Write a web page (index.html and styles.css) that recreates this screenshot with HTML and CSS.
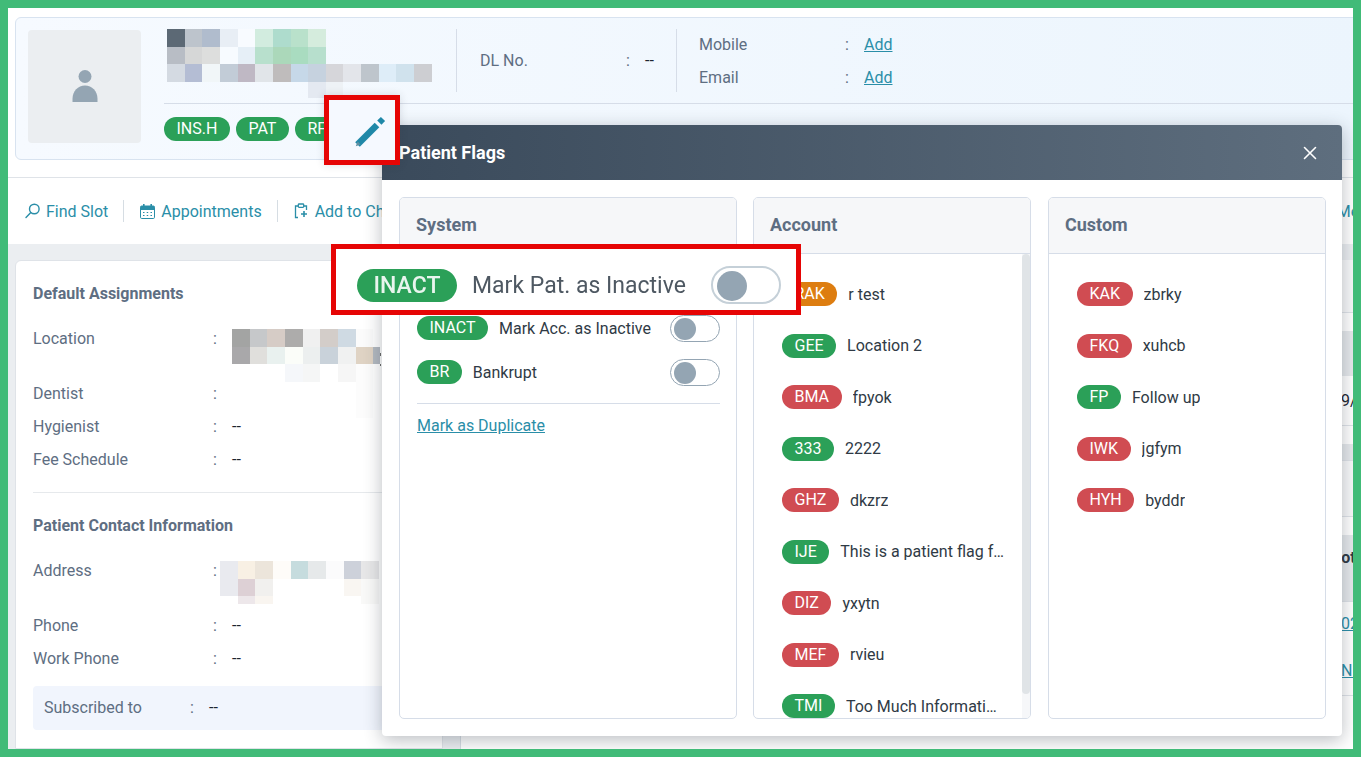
FILE: index.html
```html
<!DOCTYPE html>
<html lang="en">
<head>
<meta charset="utf-8">
<title>Patient Flags</title>
<link rel="stylesheet" href="styles.css">
</head>
<body>
<div class="frame">
  <div class="page">
    <section class="id-card">
      <div class="avatar">
        <svg width="26" height="32" viewBox="0 0 26 32"><circle cx="13" cy="6.5" r="6.5" fill="#94a5b3"/><path d="M0.5 32v-3C0.5 21 6 15.500 13 15.500S25.500 21 25.500 29v3z" fill="#94a5b3"/></svg>
      </div>
      <div class="id-main">
        <div class="id-top">
          <div class="name-block">
            <svg class="mosaic" width="265" height="69" viewBox="167 29 265 69" shape-rendering="crispEdges">
              <rect x="167" y="29" width="18" height="18" fill="#5c6975"/><rect x="185" y="29" width="17" height="18" fill="#bdc4cc"/><rect x="202" y="29" width="18" height="18" fill="#b0bccd"/><rect x="220" y="29" width="18" height="18" fill="#e8eef5"/><rect x="238" y="29" width="17" height="18" fill="#f8fbff"/><rect x="255" y="29" width="18" height="18" fill="#d2ecdf"/><rect x="273" y="29" width="18" height="18" fill="#aedccd"/><rect x="291" y="29" width="17" height="18" fill="#b9e1cb"/><rect x="308" y="29" width="18" height="18" fill="#d5ecdd"/>
              <rect x="167" y="47" width="18" height="17" fill="#b8bdc5"/><rect x="185" y="47" width="17" height="17" fill="#d6d7d7"/><rect x="202" y="47" width="18" height="17" fill="#dddedd"/><rect x="220" y="47" width="18" height="17" fill="#f7fbff"/><rect x="238" y="47" width="17" height="17" fill="#e6eff7"/><rect x="255" y="47" width="18" height="17" fill="#b8e0cd"/><rect x="273" y="47" width="18" height="17" fill="#abd8ba"/><rect x="291" y="47" width="17" height="17" fill="#a9dcc0"/><rect x="308" y="47" width="18" height="17" fill="#b7dfcd"/>
              <rect x="167" y="64" width="18" height="18" fill="#d4dae2"/><rect x="185" y="64" width="17" height="18" fill="#b4bdd4"/><rect x="202" y="64" width="18" height="18" fill="#f1f6f8"/><rect x="220" y="64" width="18" height="18" fill="#c2ccd7"/><rect x="238" y="64" width="17" height="18" fill="#bfb8c4"/><rect x="255" y="64" width="18" height="18" fill="#e1e5e9"/><rect x="273" y="64" width="18" height="18" fill="#bfbcbc"/><rect x="291" y="64" width="17" height="18" fill="#c6d8e8"/><rect x="308" y="64" width="18" height="18" fill="#c6d2df"/><rect x="326" y="64" width="17" height="18" fill="#d6d6da"/><rect x="343" y="64" width="18" height="18" fill="#e3e5ea"/><rect x="361" y="64" width="18" height="18" fill="#bec5cc"/><rect x="379" y="64" width="17" height="18" fill="#deedf8"/><rect x="396" y="64" width="18" height="18" fill="#d0e2ed"/><rect x="414" y="64" width="18" height="18" fill="#cdced2"/>
              <rect x="308" y="82" width="18" height="16" fill="#e4e9f1"/><rect x="326" y="82" width="17" height="16" fill="#eef2f6"/>
            </svg>
          </div>
          <div class="dl-block">
            <span class="dl-label">DL No.</span><span class="colon">:</span><span class="dash">--</span>
          </div>
          <div class="contact-block">
            <div class="contact-row"><span class="contact-label">Mobile</span><span class="colon">:</span><a class="link" href="#">Add</a></div>
            <div class="contact-row"><span class="contact-label">Email</span><span class="colon">:</span><a class="link" href="#">Add</a></div>
          </div>
        </div>
        <div class="id-pills">
          <span class="pill green">INS.H</span>
          <span class="pill green">PAT</span>
          <span class="pill green">RF</span>
        </div>
      </div>
    </section>

    <nav class="toolbar">
      <a class="tool" href="#">
        <svg width="15" height="16" viewBox="0 0 15 16" fill="none" stroke="#2a8ea8" stroke-width="1.400"><circle cx="9.300" cy="6" r="4.800"/><path d="M5.800 9.500 1 14.500" stroke-linecap="round"/></svg>
        Find Slot
      </a>
      <a class="tool" href="#">
        <svg width="15" height="15" viewBox="0 0 15 15"><rect x="0.500" y="2" width="14" height="12.500" rx="1.200" fill="none" stroke="#2a8ea8"/><path d="M0.500 3a1 1 0 0 1 1-1h12a1 1 0 0 1 1 1v3h-14z" fill="#2a8ea8"/><rect x="3" y="0" width="1.600" height="3" fill="#2a8ea8"/><rect x="10.400" y="0" width="1.600" height="3" fill="#2a8ea8"/><path d="M3 8.500h1.500M6.700 8.500h1.500M10.500 8.500H12M3 11.500h1.500M6.700 11.500h1.500M10.500 11.500H12" stroke="#2a8ea8" stroke-width="1.200"/></svg>
        Appointments
      </a>
      <a class="tool tool-last" href="#">
        <svg width="15" height="16" viewBox="0 0 15 16" fill="none" stroke="#2a8ea8" stroke-width="1.300"><path d="M4 3H1.500v11.500H4M10 3h2.500v4"/><rect x="4.300" y="1" width="5.400" height="3.400" rx="0.800"/><path d="M10 8v6M7 11h6" stroke-width="1.600"/></svg>
        Add to Chart
      </a>
      <a class="tool-far" href="#">Medical</a>
    </nav>

    <div class="content">
      <section class="info-card">
        <h3 class="info-title">Default Assignments</h3>
        <div class="info-grid">
          <span class="info-label tall">Location</span><span class="colon">:</span>
          <div class="info-value tall">
            <svg class="mosaic" width="150" height="89" viewBox="231 329 150 89" shape-rendering="crispEdges">
              <rect x="231" y="329" width="18" height="18" fill="#a3a4a3"/><rect x="249" y="329" width="17" height="18" fill="#c6c8ca"/><rect x="266" y="329" width="18" height="18" fill="#d6ccc6"/><rect x="284" y="329" width="18" height="18" fill="#adacab"/><rect x="302" y="329" width="17" height="18" fill="#f0f0f0"/><rect x="319" y="329" width="18" height="18" fill="#d3cdc9"/><rect x="337" y="329" width="18" height="18" fill="#cfdae3"/><rect x="355" y="329" width="17" height="18" fill="#fbfbfb"/>
              <rect x="231" y="347" width="18" height="17" fill="#a9a8aa"/><rect x="249" y="347" width="17" height="17" fill="#e0dfdc"/><rect x="266" y="347" width="18" height="17" fill="#e9f1ef"/><rect x="284" y="347" width="18" height="17" fill="#fbfdf9"/><rect x="302" y="347" width="17" height="17" fill="#ecefef"/><rect x="319" y="347" width="18" height="17" fill="#c9d2da"/><rect x="337" y="347" width="18" height="17" fill="#f0f1f1"/><rect x="355" y="347" width="17" height="17" fill="#dfd3c4"/><rect x="372" y="347" width="7" height="17" fill="#b3b9c0"/>
              <rect x="284" y="364" width="18" height="18" fill="#f5f7fa"/><rect x="302" y="364" width="17" height="18" fill="#f5f6f6"/><rect x="337" y="364" width="18" height="18" fill="#f6f6f6"/><rect x="355" y="364" width="17" height="54" fill="#fcfcfc"/>
              <rect x="379" y="353" width="1" height="3" fill="#6a6a6a"/><rect x="379" y="364" width="1" height="2" fill="#6a6a6a"/>
            </svg>
          </div>
          <span class="info-label">Dentist</span><span class="colon">:</span><span class="dash"></span>
          <span class="info-label">Hygienist</span><span class="colon">:</span><span class="dash">--</span>
          <span class="info-label">Fee Schedule</span><span class="colon">:</span><span class="dash">--</span>
        </div>
        <hr class="info-rule">
        <h3 class="info-title">Patient Contact Information</h3>
        <div class="info-grid">
          <span class="info-label tall">Address</span><span class="colon">:</span>
          <div class="info-value tall">
            <svg class="mosaic mosaic-address" width="159" height="43" viewBox="220 556 159 43" shape-rendering="crispEdges">
              <rect x="220" y="556" width="18" height="35" fill="#e9eaef"/><rect x="238" y="556" width="17" height="18" fill="#f8f0e4"/><rect x="255" y="556" width="18" height="18" fill="#ece5db"/><rect x="273" y="556" width="18" height="18" fill="#fefcf9"/><rect x="291" y="556" width="17" height="18" fill="#c6dcde"/><rect x="308" y="556" width="18" height="18" fill="#e6e9ea"/><rect x="326" y="556" width="18" height="18" fill="#fbfbfc"/><rect x="344" y="556" width="17" height="18" fill="#cdd1da"/><rect x="361" y="556" width="18" height="18" fill="#e7e7e8"/>
              <rect x="238" y="574" width="17" height="17" fill="#ddd0d5"/><rect x="255" y="574" width="18" height="17" fill="#f1f0ee"/><rect x="344" y="574" width="17" height="17" fill="#f9f6f2"/><rect x="361" y="574" width="18" height="25" fill="#f9f9f8"/>
              <rect x="238" y="591" width="17" height="8" fill="#ede7ea"/><rect x="255" y="591" width="18" height="8" fill="#f9f5f0"/>
            </svg>
          </div>
          <span class="info-label">Phone</span><span class="colon">:</span><span class="dash">--</span>
          <span class="info-label">Work Phone</span><span class="colon">:</span><span class="dash">--</span>
        </div>
        <div class="subscribed">
          <span class="sub-label">Subscribed to</span><span class="colon">:</span><span class="dash">--</span>
        </div>
      </section>

      <section class="data-col">
        <div class="d-row d-light"></div>
        <div class="d-gap"></div>
        <div class="d-head"></div>
        <div class="d-row d-text"><span class="d-cell">9/12/2023</span></div>
        <div class="d-gap"></div>
        <div class="d-thin"></div>
        <div class="d-row d-light d-wide"></div>
        <div class="d-gap"></div>
        <div class="d-head d-head-tall"><span class="d-bold">Notes</span></div>
        <div class="d-row d-text d-plain"><a class="link d-cell" href="#">02/2020</a></div>
        <div class="d-row d-text"><a class="link d-cell" href="#">NB-1042</a></div>
      </section>
    </div>
  </div>

  <div class="modal">
    <header class="modal-head">
      <h2 class="modal-title">Patient Flags</h2>
      <svg class="modal-close" width="14" height="14" viewBox="0 0 14 14" stroke="#fff" stroke-width="1.600" stroke-linecap="round"><path d="M1.500 1.500l11 11M12.500 1.500l-11 11"/></svg>
    </header>
    <div class="modal-body">
      <section class="panel panel-system">
        <h3 class="panel-head">System</h3>
        <div class="system-list">
          <div class="sys-row"><span class="pill green">INACT</span><span class="flag-text">Mark Pat. as Inactive</span><span class="toggle"><span class="knob"></span></span></div>
          <div class="sys-row"><span class="pill green">INACT</span><span class="flag-text">Mark Acc. as Inactive</span><span class="toggle"><span class="knob"></span></span></div>
          <div class="sys-row"><span class="pill green">BR</span><span class="flag-text">Bankrupt</span><span class="toggle"><span class="knob"></span></span></div>
          <hr class="sys-rule">
          <a class="link dup" href="#">Mark as Duplicate</a>
        </div>
      </section>
      <section class="panel">
        <h3 class="panel-head">Account</h3>
        <div class="scroll-box">
          <ul class="flag-list flag-list-scroll">
            <li><span class="pill orange">RAK</span><span class="flag-text">r test</span></li>
            <li><span class="pill green">GEE</span><span class="flag-text">Location 2</span></li>
            <li><span class="pill red">BMA</span><span class="flag-text">fpyok</span></li>
            <li><span class="pill green">333</span><span class="flag-text">2222</span></li>
            <li><span class="pill red">GHZ</span><span class="flag-text">dkzrz</span></li>
            <li><span class="pill green">IJE</span><span class="flag-text">This is a patient flag for testing</span></li>
            <li><span class="pill red">DIZ</span><span class="flag-text">yxytn</span></li>
            <li><span class="pill red">MEF</span><span class="flag-text">rvieu</span></li>
            <li><span class="pill green">TMI</span><span class="flag-text">Too Much Information Flag</span></li>
          </ul>
          <div class="scrollbar"><div class="scroll-thumb"></div></div>
        </div>
      </section>
      <section class="panel panel-custom">
        <h3 class="panel-head">Custom</h3>
        <ul class="flag-list">
          <li><span class="pill red">KAK</span><span class="flag-text">zbrky</span></li>
          <li><span class="pill red">FKQ</span><span class="flag-text">xuhcb</span></li>
          <li><span class="pill green">FP</span><span class="flag-text">Follow up</span></li>
          <li><span class="pill red">IWK</span><span class="flag-text">jgfym</span></li>
          <li><span class="pill red">HYH</span><span class="flag-text">byddr</span></li>
        </ul>
      </section>
    </div>
  </div>

  <div class="mark mark-pencil">
    <svg width="32" height="32" viewBox="0 0 32 32"><path d="M3.500 28.500 L23 9" stroke="#1f88a8" stroke-width="6.500" stroke-linecap="butt"/><path d="M1.800 30.200 L3.600 25.400 L6.600 28.400 Z" fill="#5f8ea0"/><path d="M25.300 6.700 L29 3" stroke="#1f88a8" stroke-width="6"/></svg>
  </div>
  <div class="mark mark-inactive">
    <span class="big-pill">INACT</span>
    <span class="big-text">Mark Pat. as Inactive</span>
    <span class="big-toggle"><span class="big-knob"></span></span>
  </div>
</div>
</body>
</html>
```
FILE: styles.css
```css
* { box-sizing: border-box; }
html, body { margin: 0; padding: 0; }
body { font-family: Roboto, "Liberation Sans", sans-serif; font-size: 16px; color: #2f3a45; overflow: hidden; }

.frame { position: relative; width: 1361px; height: 757px; border: 8px solid #41bb78; background: #fff; overflow: hidden; }
.page { display: flex; flex-direction: column; height: 100%; }

.link { color: #2a8ea8; text-decoration: underline; }
.colon { color: #5e6e82; }
.dash { color: #1c2530; }

.pill { display: inline-block; flex: none; height: 24px; line-height: 24px; padding: 0 12.500px; border-radius: 12px; color: #fff; white-space: nowrap; }
.green { background: #2ba058; }
.red { background: #d04c52; }
.orange { background: #dd7d10; }

/* identity card */
.id-card { display: flex; flex: none; height: 143px; margin: 9px -12px 17px 7px; padding: 12px 0 0 12px; border: 1px solid #d8e3f0; border-radius: 6px; background: linear-gradient(90deg, #f6faff, #ecf5fd); }
.avatar { display: flex; align-items: center; justify-content: center; flex: none; width: 113px; height: 113px; padding-bottom: 2px; border-radius: 4px; background: #ebeef1; }
.id-main { flex: 1; margin: -1px 0 0 23px; }
.id-top { display: flex; height: 75px; padding-bottom: 11px; border-bottom: 1px solid #d6dde8; }
.name-block { position: relative; width: 292px; }
.mosaic { display: block; }
.name-block .mosaic { margin-left: 3px; }
.dl-block { display: flex; align-items: center; width: 220px; padding-left: 23px; border-left: 1px solid #d6dde8; }
.dl-label { width: 146px; color: #5e6e82; }
.dl-block .colon, .contact-row .colon { width: 19px; }
.contact-block { display: flex; flex-direction: column; justify-content: center; padding-left: 22px; border-left: 1px solid #d6dde8; }
.contact-row { display: flex; flex: none; height: 33px; line-height: 33px; }
.contact-label { width: 146px; color: #5e6e82; }
.id-pills { display: flex; gap: 6px; margin-top: 13px; }

/* toolbar */
.toolbar { display: flex; flex: none; align-items: center; height: 67px; padding-left: 17px; border-top: 1px solid #dfe3e8; overflow: hidden; }
.tool { display: flex; align-items: center; gap: 6px; height: 22px; margin-right: 16px; padding-right: 15px; border-right: 1px solid #d6dde3; color: #2a8ea8; text-decoration: none; white-space: nowrap; }
.tool-last { border-right: 0; }
.tool-far { margin-left: auto; margin-right: -40px; color: #2a8ea8; text-decoration: none; }

/* content */
.content { display: flex; flex: 1; min-height: 0; gap: 17px; padding: 16px 0 0 7px; background: #ebeef1; }
.info-card { flex: none; width: 428px; padding: 21px 17px 0 17px; border: 1px solid #dfe3e8; border-radius: 6px 6px 0 0; background: #fff; }
.info-title { height: 24px; margin: 0 0 16px; color: #5e6e82; font-size: 16px; line-height: 24px; font-weight: 700; }
.info-grid { display: grid; grid-template-columns: 180px 19px 1fr; grid-auto-rows: 33px; line-height: 33px; }
.info-label { color: #5e6e82; }
.info-grid .tall { height: 55px; }
.info-grid .info-value { position: relative; height: 55px; padding-top: 7px; }
.info-grid > .info-label.tall { grid-row: span 1; }
.info-grid { grid-template-rows: 55px; }
.mosaic-address { margin-left: -12px; }
.info-rule { height: 1px; margin: 16px 0 21px; border: 0; background: #e6e9ec; }
.subscribed { display: flex; height: 44px; margin-top: 11px; margin-right: -40px; padding-left: 11px; border-radius: 4px; background: #f1f5fd; line-height: 44px; }
.sub-label { width: 146px; color: #5e6e82; }
.subscribed .colon { width: 19px; }

/* data column behind the dialog */
.data-col { flex: 1; min-width: 0; border-left: 1px solid #d6dde3; background: #fff; overflow: hidden; }
.d-row { height: 50px; border-bottom: 1px solid #dfe3e8; line-height: 50px; padding-left: 880px; white-space: nowrap; }
.d-light { height: 53px; background: #f8f9fa; }
.d-wide { height: 56px; }
.d-gap { height: 18px; }
.d-head { height: 45px; background: #e6e9ec; }
.d-thin { height: 17px; background: #e6e9ec; border-bottom: 1px solid #dfe3e8; }
.d-head-tall { height: 67px; padding-left: 869px; line-height: 46px; border-bottom: 1px solid #dfe3e8; }
.d-bold { font-weight: 700; color: #2f3a45; }
.d-text { color: #1c2530; }
.d-plain { height: 44px; line-height: 44px; border-bottom: 0; }

/* dialog */
.modal { position: absolute; left: 374px; top: 117px; width: 960px; height: 611px; border-radius: 4px; background: #fff; box-shadow: 0 4px 18px rgba(40, 50, 62, .32); }
.modal-head { display: flex; align-items: center; justify-content: space-between; height: 55px; padding: 0 25px 0 17px; border-radius: 4px 4px 0 0; background: linear-gradient(90deg, #3a4a5b, #5e6e7e); }
.modal-title { margin: 0; color: #fff; font-size: 18px; font-weight: 700; }
.modal-body { display: flex; gap: 16px; padding: 17px 16px 0 17px; }
.panel { display: flex; flex-direction: column; flex: none; width: 278px; height: 522px; border: 1px solid #d6dde8; border-radius: 5px; overflow: hidden; }
.panel-system { width: 338px; }
.panel-custom { margin-left: 1px; }
.panel-head { flex: none; height: 56px; margin: 0; padding-left: 16px; border-bottom: 1px solid #d6dde8; background: #f6f7f9; color: #5e6e82; font-size: 18px; font-weight: 700; line-height: 54px; }

.system-list { padding: 18px 16px 0 17px; }
.sys-row { display: flex; align-items: center; height: 24px; margin-bottom: 20px; }
.flag-text { min-width: 0; margin-left: 11px; overflow: hidden; white-space: nowrap; text-overflow: ellipsis; }
.toggle { position: relative; flex: none; width: 50px; height: 27px; margin-left: auto; border: 1px solid #94a5b3; border-radius: 14px; background: #fff; }
.knob { position: absolute; left: 3px; top: 2px; width: 22px; height: 22px; border-radius: 50%; background: #94a5b3; }
.sys-rule { height: 1px; margin: -1px 0 10px; border: 0; background: #d6dde8; }
.dup { display: block; line-height: 24px; }

.scroll-box { position: relative; flex: 1; min-height: 0; overflow: hidden; }
.flag-list { display: flex; flex-direction: column; gap: 27.500px; margin: 0; padding: 28px 25px 0 28px; list-style: none; }
.flag-list li { display: flex; align-items: center; height: 24px; }
.scrollbar { position: absolute; top: 0; right: 0; bottom: 0; width: 8px; background: #f6f7f9; }
.scroll-thumb { height: 440px; border-radius: 4px; background: #e0e4e7; }

/* red annotation boxes */
.mark { position: absolute; border: 5px solid #e60505; background: #fff; }
.mark-pencil { display: flex; align-items: center; justify-content: center; left: 316px; top: 87px; width: 76px; height: 70px; padding: 4px 0 0 16px; background: #f5f9ff; box-shadow: 0 0 8px rgba(40, 50, 62, .15); }
.mark-inactive { display: flex; align-items: center; left: 323px; top: 236px; width: 470px; height: 71px; padding: 11px 15px 0 21px; }
.big-pill { height: 33px; width: 100px; border-radius: 17px; background: #2ba058; color: #e9f5ee; font-size: 23px; font-weight: 500; line-height: 33px; text-align: center; filter: blur(.4px); }
.big-text { margin-left: 15px; color: #4e5862; font-size: 23px; filter: blur(.4px); }
.big-toggle { position: relative; width: 70px; height: 38px; margin-left: auto; border: 2px solid #c5d0d8; border-radius: 19px; background: #fff; }
.big-knob { position: absolute; left: 4px; top: 3px; width: 30px; height: 30px; border-radius: 50%; background: #94a5b3; }
```
